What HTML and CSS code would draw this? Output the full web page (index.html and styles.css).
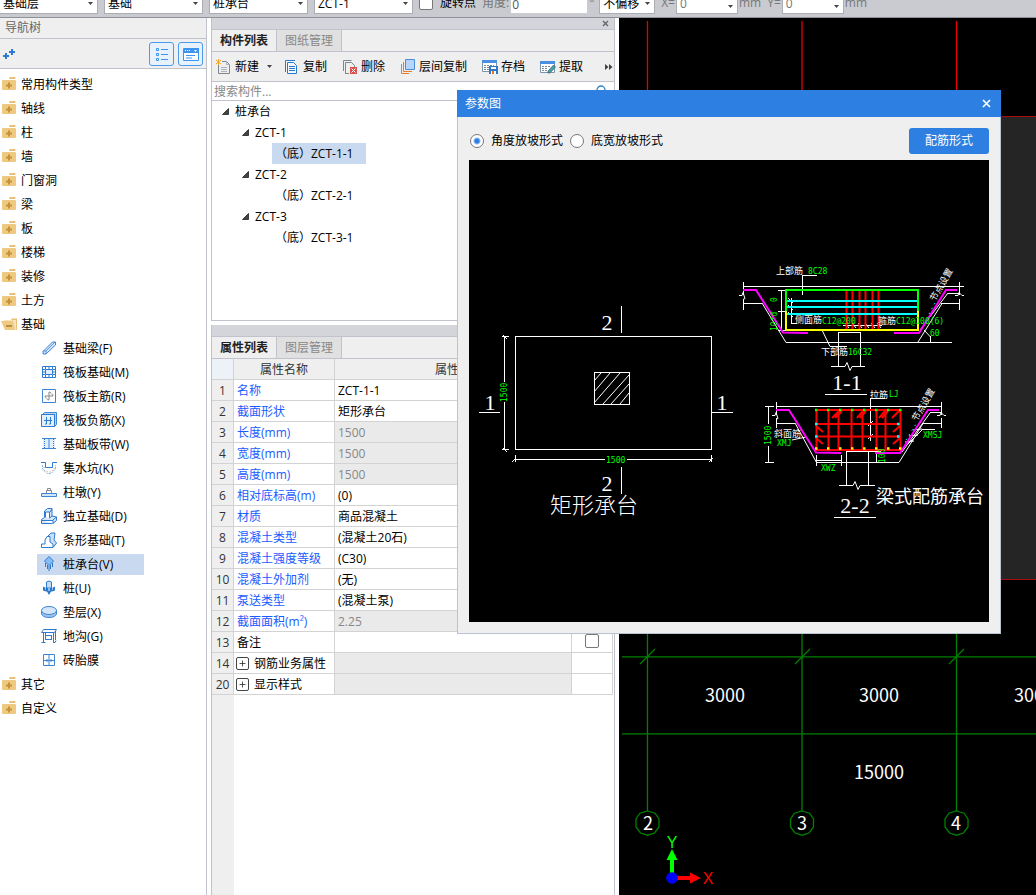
FILE: index.html
```html
<!DOCTYPE html>
<html lang="zh-CN">
<head>
<meta charset="utf-8">
<title>参数图</title>
<link rel="stylesheet" href="styles.css">
</head>
<body>
<svg class="defs" aria-hidden="true">
  <symbol id="caret" viewBox="0 0 5 3"><path d="M0 0h5L2.500 3z" fill="#444"/></symbol>
  <symbol id="expanded" viewBox="0 0 7 7"><path d="M6.500 .5v6H.5z" fill="#444" stroke="#222" stroke-width=".8"/></symbol>
  <symbol id="folder" viewBox="0 0 16 16"><path d="M8 2.500L9 1h5l.5 1v1H8z" fill="#e9c078"/><path d="M2 4h12q1 0 1 1v8q0 1-1 1H2q-1 0-1-1V5q0-1 1-1z" fill="#efc982"/><path d="M8 6.500v6M5 9.500h6" stroke="#c4933c" stroke-width="2"/></symbol>
  <symbol id="folder-open" viewBox="0 0 16 16"><path d="M3 4h7l1-1h5v11H4z" fill="#f7e3b8"/><path d="M11 2.500h5v11l-1 .5V4h-5z" fill="#e9c078"/><path d="M0 5h12l2 9H4z" fill="#efc982"/><path d="M5 10h6" stroke="#a87a24" stroke-width="1.500"/></symbol>
  <symbol id="i-beam" viewBox="0 0 16 16"><path d="M2 11.500L11.500 2h3v3L5 14H2z" fill="#d5e5f8" stroke="#3d86d6"/><path d="M2 11h3v3M5 11l9-9" fill="none" stroke="#3d86d6" stroke-width=".8"/></symbol>
  <symbol id="i-raft" viewBox="0 0 16 16"><g fill="none" stroke="#2d7ad2"><path d="M1.500 2.500h13v11h-13z"/><path d="M4.500 5.500h7v5h-7z" fill="#e3eefb"/><path d="M4.500 3v2M8 3v2M11.500 3v2M4.500 11v2M8 11v2M11.500 11v2M2 5.500h2M2 10.500h2M12 5.500h2M12 10.500h2M2 8h2M12 8h2"/></g></symbol>
  <symbol id="i-main" viewBox="0 0 16 16"><path d="M1.500 1.500h13v13h-13z" fill="#fff" stroke="#3d86d6"/><path d="M8 4v8M4 8h8M8 4q2 0 2 1.500M8 12q-2 0-2-1.500M4 8q0 2 1.500 2M12 8q0-2-1.500-2" fill="none" stroke="#888"/></symbol>
  <symbol id="i-neg" viewBox="0 0 16 16"><path d="M3.500.5h12v12l-2 2V2.500h-12z" fill="#b5d3f5" stroke="#3d86d6"/><path d="M.5 2.500h13v12H.5z" fill="#e3eefb" stroke="#2d7ad2"/><path d="M5.500 5v7M9.500 5v7M3 8.500h8M4 12h1.500M8 12h1.500" fill="none" stroke="#2d7ad2"/></symbol>
  <symbol id="i-strip" viewBox="0 0 16 16"><path d="M2 2h12v11H2z" fill="#e3eefb"/><path d="M1 2.500h14M1 12.500h14M8 3v10" stroke="#3d86d6" fill="none"/><path d="M3.500 3v10M12.500 3v10" stroke="#2d7ad2" stroke-dasharray="1 1"/></symbol>
  <symbol id="i-sump" viewBox="0 0 16 16"><path d="M0 2.500h4.500v5h7v-5H16" fill="none" stroke="#2d7ad2"/><path d="M1.500 5v4L6 13.500h4L14.500 9V5" fill="none" stroke="#7fb0e6" stroke-dasharray="2 1"/><path d="M3 7v3l4 2h3l3-3V8" fill="none" stroke="#999" stroke-dasharray="1 2"/></symbol>
  <symbol id="i-pier" viewBox="0 0 16 16"><path d="M6.500 4.500h3v2h-3zM5.500 9V6.500h5V9" fill="none" stroke="#888"/><path d="M.5 9.500h15v3H.5z" fill="#d5e5f8" stroke="#3d86d6"/></symbol>
  <symbol id="i-iso" viewBox="0 0 16 16"><path d="M.5 11.500l3-2V3l3-2.500h4.500V8l4.500 1v3.500L12 15.500H.5z" fill="#d5e5f8" stroke="#2d7ad2"/><path d="M4.500 9.500V4h4v6M9 4l2-3M.5 12.500H12v3M12 12l3.500-3M8.500 10l2.500-2" fill="#fff" stroke="#2d7ad2"/></symbol>
  <symbol id="i-linear" viewBox="0 0 16 16"><path d="M5 6l5-5h4l-1 7 2.500 3-3 4z" fill="#cfe1f7" stroke="#2d7ad2"/><path d="M.5 15.500V12H4V8l2-3.500h3V10l3 2v3.500z" fill="#fff" stroke="#2d7ad2"/></symbol>
  <symbol id="i-cap" viewBox="0 0 16 16"><path d="M8 .5L12.500 5 8 9.500 3.500 5z" fill="#86bdf4" stroke="#2d7ad2"/><path d="M4.500 7v4M8 10v5M11.500 7v4M6.500 9v4M9.500 9v4" stroke="#2878cc"/></symbol>
  <symbol id="i-pile" viewBox="0 0 16 16"><path d="M5.500 2q2.500-2 5 0v6h-5z" fill="#c5ddf7" stroke="#2d7ad2"/><path d="M2 6.500l3 1.500h6l3-1.500v4l-3 1h-1L8 15l-2-3.500H5l-3-1z" fill="#2878cc"/><path d="M8 8v3M4 9h1M11 9h1" stroke="#fff"/></symbol>
  <symbol id="i-cushion" viewBox="0 0 16 16"><path d="M.5 6v4q1.500 3.500 7.500 3.500t7.500-3.500V6" fill="#9fc5ef" stroke="#3d86d6"/><ellipse cx="8" cy="6.500" rx="7.500" ry="4" fill="#d5e5f8" stroke="#3d86d6"/></symbol>
  <symbol id="i-trench" viewBox="0 0 16 16"><g fill="none" stroke="#2d7ad2"><path d="M.5 4.500l2-3h13l-2 3z"/><path d="M2.500 5v9M4.500 5v7M10.500 7v5M12.500 5v9M5 7.500h6M.5 14.500h4M5 11.500h6M12 14.500h2l1-2M14.500 3v9"/></g></symbol>
  <symbol id="i-brick" viewBox="0 0 16 16"><path d="M2.500 2.500h11v11h-11zM8 3v10M3 8.500h10M6 7v3M10 7v3" fill="#fff" stroke="#3d86d6"/></symbol>
  <symbol id="t-new" viewBox="0 0 16 16"><path d="M2.500 6v8.500h11v-9l-3-3H6" fill="#eee" stroke="#7c8792"/><path d="M10.500 2.500v3h3M5 8.500h6M5 10.500h6M5 12.500h6" fill="none" stroke="#aab2ba"/><path d="M0 1l5 4M5 1L0 5M2.500 0v6" stroke="#f0a51e"/></symbol>
  <symbol id="t-copy" viewBox="0 0 16 16"><path d="M1.500 13V1.500H11M3.500 3.500h6l3 3v8h-9z" fill="#f4f8fd" stroke="#2878cc"/><path d="M5 7.500h6M5 9.500h6M5 11.500h6" stroke="#2878cc"/></symbol>
  <symbol id="t-delete" viewBox="0 0 16 16"><path d="M1.500 12V1.500h8M3.500 14.500v-11h6l3 3V8" fill="none" stroke="#7c8792"/><path d="M3 14.500h4" stroke="#7c8792"/><rect x="8" y="8" width="7" height="7" fill="#d85050"/><path d="M9.500 9.500l4 4M13.500 9.500l-4 4" stroke="#fff"/></symbol>
  <symbol id="t-layer" viewBox="0 0 16 16"><path d="M5.500.5h9v10h-9z" fill="#b9d6fa" stroke="#4a8edb"/><path d="M3.500 3v9.500H12M1.500 5v9.500H9" fill="none" stroke="#e87b26"/></symbol>
  <symbol id="t-save" viewBox="0 0 16 16"><path d="M.5 1.500h14v11H.5z" fill="#fff" stroke="#7d94ad"/><path d="M0 1h15v3H0z" fill="#4a90e2"/><path d="M2 6.500h10M2 8.500h5M2 10.500h5" stroke="#789" stroke-dasharray="2 1"/><path d="M7 7h9v8H7z" fill="#3077cc"/><path d="M9 8h5v2H9z" fill="#fff"/><path d="M9 12h5v3H9z" fill="#fff"/><path d="M10 12h2v3h-2z" fill="#ee7520"/></symbol>
  <symbol id="t-extract" viewBox="0 0 16 16"><path d="M.5 2.500h14v11H.5z" fill="#fff" stroke="#7d94ad"/><path d="M0 2h15v3H0z" fill="#4a90e2"/><path d="M2 7.500h9M2 9.500h6M2 11.500h5" stroke="#789" stroke-dasharray="2 1"/><path d="M13.500 6l2 2L10 14H8v-2z" fill="#3ba4b5" stroke="#555" stroke-width=".7"/></symbol>
</svg>
<div class="app">
  <header class="options">
    <label class="combo wide"><select aria-label="楼层"><option>基础层</option></select><svg><use href="#caret"/></svg></label>
    <label class="combo wide"><select aria-label="分类"><option>基础</option></select><svg><use href="#caret"/></svg></label>
    <label class="combo wide"><select aria-label="构件类型"><option>桩承台</option></select><svg><use href="#caret"/></svg></label>
    <label class="combo wide"><select aria-label="构件"><option>ZCT-1</option></select><svg><use href="#caret"/></svg></label>
    <label class="check-label"><input type="checkbox" class="check">旋转点</label>
    <label class="unit angle">角度:<input class="angle-input" type="text" value="0"><span class="degree">°</span></label>
    <label class="combo offset"><select aria-label="偏移"><option>不偏移</option></select><svg><use href="#caret"/></svg></label>
    <label class="unit">X=<span class="combo spin"><select><option>0</option></select><svg><use href="#caret"/></svg></span>mm</label>
    <label class="unit">Y=<span class="combo spin"><select><option>0</option></select><svg><use href="#caret"/></svg></span>mm</label>
  </header>
  <div class="workspace">
    <nav class="nav">
      <h2 class="nav-title">导航树</h2>
      <div class="nav-tools">
        <button class="plus" aria-label="添加"><svg viewBox="0 0 14 14"><path d="M0 9h6M3 6v6M6 5h6M9 2v6" stroke="#2d7ad2" stroke-width="2"/></svg></button>
        <button class="view" aria-label="列表"><svg viewBox="0 0 16 16" fill="none" stroke="#3d94ee"><path d="M2.500 2.500h2v2h-2zM2.500 7.500h2v2h-2zM2.500 12.500h2v2h-2zM7 3.500h7M7 8.500h7M7 13.500h7"/></svg></button>
        <button class="view" aria-label="面板"><svg viewBox="0 0 16 16"><path d="M.5 2.500h15v12H.5z" fill="#fff" stroke="#3d94ee"/><path d="M1 2h15v5H1z" fill="#3d94ee"/><path d="M2 4.500h6" stroke="#fff" stroke-dasharray="1 1"/><path d="M11 4h3l-1.500 2z" fill="#fff"/><path d="M3 9.500h9M3 12h6" stroke="#3d94ee"/></svg></button>
      </div>
      <ul class="tree">
        <li><button class="node"><svg><use href="#folder"/></svg>常用构件类型</button></li>
        <li><button class="node"><svg><use href="#folder"/></svg>轴线</button></li>
        <li><button class="node"><svg><use href="#folder"/></svg>柱</button></li>
        <li><button class="node"><svg><use href="#folder"/></svg>墙</button></li>
        <li><button class="node"><svg><use href="#folder"/></svg>门窗洞</button></li>
        <li><button class="node"><svg><use href="#folder"/></svg>梁</button></li>
        <li><button class="node"><svg><use href="#folder"/></svg>板</button></li>
        <li><button class="node"><svg><use href="#folder"/></svg>楼梯</button></li>
        <li><button class="node"><svg><use href="#folder"/></svg>装修</button></li>
        <li><button class="node"><svg><use href="#folder"/></svg>土方</button></li>
        <li><button class="node"><svg><use href="#folder-open"/></svg>基础</button>
          <ul class="subtree">
            <li><button class="leaf"><svg><use href="#i-beam"/></svg>基础梁(F)</button></li>
            <li><button class="leaf"><svg><use href="#i-raft"/></svg>筏板基础(M)</button></li>
            <li><button class="leaf"><svg><use href="#i-main"/></svg>筏板主筋(R)</button></li>
            <li><button class="leaf"><svg><use href="#i-neg"/></svg>筏板负筋(X)</button></li>
            <li><button class="leaf"><svg><use href="#i-strip"/></svg>基础板带(W)</button></li>
            <li><button class="leaf"><svg><use href="#i-sump"/></svg>集水坑(K)</button></li>
            <li><button class="leaf"><svg><use href="#i-pier"/></svg>柱墩(Y)</button></li>
            <li><button class="leaf"><svg><use href="#i-iso"/></svg>独立基础(D)</button></li>
            <li><button class="leaf"><svg><use href="#i-linear"/></svg>条形基础(T)</button></li>
            <li><button class="leaf selected"><svg><use href="#i-cap"/></svg>桩承台(V)</button></li>
            <li><button class="leaf"><svg><use href="#i-pile"/></svg>桩(U)</button></li>
            <li><button class="leaf"><svg><use href="#i-cushion"/></svg>垫层(X)</button></li>
            <li><button class="leaf"><svg><use href="#i-trench"/></svg>地沟(G)</button></li>
            <li><button class="leaf"><svg><use href="#i-brick"/></svg>砖胎膜</button></li>
          </ul>
        </li>
        <li><button class="node"><svg><use href="#folder"/></svg>其它</button></li>
        <li><button class="node"><svg><use href="#folder"/></svg>自定义</button></li>
      </ul>
    </nav>
    <div class="panels">
      <section class="panel components">
        <div class="strip"><button class="strip-close" aria-label="关闭"><svg viewBox="0 0 7 7"><path d="M1 1l5 5M6 1L1 6" stroke="#666" stroke-width="1.400"/></svg></button></div>
        <div class="tabs"><button class="tab active">构件列表</button><button class="tab">图纸管理</button></div>
        <div class="toolbar">
          <button class="tool"><svg><use href="#t-new"/></svg>新建<svg class="tool-caret"><use href="#caret"/></svg></button>
          <button class="tool"><svg><use href="#t-copy"/></svg>复制</button>
          <button class="tool"><svg><use href="#t-delete"/></svg>删除</button>
          <button class="tool"><svg><use href="#t-layer"/></svg>层间复制</button>
          <button class="tool"><svg><use href="#t-save"/></svg>存档</button>
          <button class="tool"><svg><use href="#t-extract"/></svg>提取</button>
          <button class="more" aria-label="更多"><svg viewBox="0 0 8 6"><path d="M0 0l3.500 3L0 6zM4 0l3.500 3L4 6z" fill="#444"/></svg></button>
        </div>
        <div class="search"><input type="text" placeholder="搜索构件..." aria-label="搜索构件"><svg viewBox="0 0 12 12"><circle cx="5" cy="5" r="4" fill="none" stroke="#2d86c8" stroke-width="1.300"/><path d="M8 8l3 3" stroke="#2d86c8"/></svg></div>
        <ul class="list">
          <li class="root"><svg><use href="#expanded"/></svg>桩承台</li>
          <li class="branch"><svg><use href="#expanded"/></svg>ZCT-1</li>
          <li class="item"><span class="current">（底）ZCT-1-1</span></li>
          <li class="branch"><svg><use href="#expanded"/></svg>ZCT-2</li>
          <li class="item"><span>（底）ZCT-2-1</span></li>
          <li class="branch"><svg><use href="#expanded"/></svg>ZCT-3</li>
          <li class="item"><span>（底）ZCT-3-1</span></li>
        </ul>
      </section>
      <section class="panel properties">
        <div class="strip"></div>
        <div class="tabs"><button class="tab active">属性列表</button><button class="tab">图层管理</button></div>
        <div class="sheet">
        <table class="props">
          <colgroup><col class="c-num"><col class="c-name"><col class="c-value"><col class="c-extra"></colgroup>
          <thead><tr><th class="corner"></th><th>属性名称</th><th>属性值</th><th></th></tr></thead>
          <tbody>
            <tr><th>1</th><td class="blue">名称</td><td>ZCT-1-1</td><td></td></tr>
            <tr><th>2</th><td class="blue">截面形状</td><td>矩形承台</td><td></td></tr>
            <tr><th>3</th><td class="blue">长度(mm)</td><td class="locked">1500</td><td></td></tr>
            <tr><th>4</th><td class="blue">宽度(mm)</td><td class="locked">1500</td><td></td></tr>
            <tr><th>5</th><td class="blue">高度(mm)</td><td class="locked">1500</td><td></td></tr>
            <tr><th>6</th><td class="blue">相对底标高(m)</td><td>(0)</td><td></td></tr>
            <tr><th>7</th><td class="blue">材质</td><td>商品混凝土</td><td></td></tr>
            <tr><th>8</th><td class="blue">混凝土类型</td><td>(混凝土20石)</td><td></td></tr>
            <tr><th>9</th><td class="blue">混凝土强度等级</td><td>(C30)</td><td></td></tr>
            <tr><th>10</th><td class="blue">混凝土外加剂</td><td>(无)</td><td></td></tr>
            <tr><th>11</th><td class="blue">泵送类型</td><td>(混凝土泵)</td><td></td></tr>
            <tr><th>12</th><td class="blue">截面面积(m²)</td><td class="locked">2.25</td><td></td></tr>
            <tr><th>13</th><td>备注</td><td></td><td class="tick"><input type="checkbox" class="check" aria-label="备注附加"></td></tr>
            <tr><th>14</th><td><button class="expand" aria-label="展开"><svg viewBox="0 0 13 13"><path d="M3 6.500h7M6.500 3v7" stroke="#333"/></svg></button>钢筋业务属性</td><td class="locked"></td><td></td></tr>
            <tr><th>20</th><td><button class="expand" aria-label="展开"><svg viewBox="0 0 13 13"><path d="M3 6.500h7M6.500 3v7" stroke="#333"/></svg></button>显示样式</td><td class="locked"></td><td></td></tr>
          </tbody>
        </table>
        </div>
      </section>
    </div>
    <main class="canvas">
      <svg viewBox="619 18 417 877" preserveAspectRatio="xMinYMin slice">
        <rect x="700" y="117" width="336" height="462" fill="#252525"/>
        <path d="M700 116.500h336M700 579.500h336" stroke="#a80c0c"/>
        <path d="M647.500 21v100M802 21v100M956.500 21v100" stroke="#e80000" stroke-width="1.300"/>
        <g stroke="#008000" fill="none" stroke-width="1.300">
          <path d="M647.500 600v211M802 600v211M956.500 600v211M622 656.800h414M622 733.800h414"/>
          <path d="M640 664l15-15M795 664l15-15M949 664l15-15"/>
          <path id="bubble" d="M647.500 811l7.500 2.200 4 5.800v8l-4.500 6-7 2.200-7-2.200-4.500-6v-8l4-5.800z"/>
          <use href="#bubble" x="154.500"/><use href="#bubble" x="309"/>
        </g>
        <g class="axis-text">
          <text x="725" y="702">3000</text><text x="879" y="702">3000</text><text x="1034" y="702">3000</text><text x="879" y="779">15000</text>
          <text x="648" y="830">2</text><text x="802" y="830">3</text><text x="956" y="830">4</text>
        </g>
        <path d="M672 849l5.500 11H674v13h-4v-13h-3.500z" fill="#0f0"/>
        <path d="M701 878l-11-5.500V876h-13v4h13v3.500z" fill="#f00"/>
        <circle cx="672" cy="878" r="5.800" fill="#00f"/>
        <text class="axis-y" x="672" y="848">Y</text><text class="axis-x" x="708" y="884">X</text>
      </svg>
    </main>
  </div>
  <div class="dialog" role="dialog" aria-labelledby="dialog-title">
    <div class="dialog-head"><h2 id="dialog-title">参数图</h2><button aria-label="关闭"><svg viewBox="0 0 9 9"><path d="M1 1l7 7M8 1L1 8" stroke="#fff" stroke-width="1.700"/></svg></button></div>
    <div class="dialog-body">
      <div class="dialog-bar">
        <label><input type="radio" name="slope" checked>角度放坡形式</label>
        <label><input type="radio" name="slope">底宽放坡形式</label>
        <button class="primary">配筋形式</button>
      </div>
      <svg class="drawing" viewBox="469 160 520 462">
        <rect x="469" y="160" width="520" height="462"/>
        <g class="lines">
          <path d="M515.500 336.500h196v113h-196zM621.500 306v27M621.500 467v27M479 412.500h21M712 412.500h21"/>
          <path d="M504.500 336v46M504.500 402v48M502 336.500h7M502 449.500h7M515 459.500h90M627 459.500h85M515.500 455v7M711.500 455v7M594.500 372.500h35v32h-35z"/>
        </g>
        <path class="diag" d="M503 335l4 4M503 448l4 4M512 462l4-4M709 462l4-4M594 381l7-8M594 392l16-19M594 403l26-30M603 404l26-29M611 404l18-20M620 404l9-11"/>
        <g class="mark"><text x="607" y="330">2</text><text x="607" y="491">2</text><text x="490" y="410">1</text><text x="722" y="410">1</text><text x="847" y="390">1-1</text><text x="855" y="513">2-2</text></g>
        <text class="caption" x="550" y="513">矩形承台</text>
        <text class="caption-small" x="876" y="503">梁式配筋承台</text>
        <g class="dim"><text x="606" y="463">1500</text><text transform="translate(507 402) rotate(-90)">1500</text></g>

        <g class="lines">
          <path d="M743.500 286.500h220M743.500 282v13M743.500 299v11M959.500 282v13M959.500 299v11M743 303.500h19M941 303.500h19M948 293.500h11"/>
          <path d="M786 342.500h166M802.500 295v-19.500H817M781.500 290v40M778 290.500h7M778 311.500h7M778 330.500h7M791.500 298v25.500h5M843 325.500h39M838.500 366v-33.500h22V366M831 366.500h14M852 366.500h13M830 346.500h17M930.500 336v6M825 394.500h42"/>
        </g>
        <path class="diag" d="M739 295.500h3l1-3 2 6-2 1M955 295.500h3l1-3 3 3h2M762 303l24 39.500M918 342l24-38.500M920 330l28-37M821.500 329l8.500 17.500M924 330l6.500 7M845 366.500l2-4 3 8 2-4M788 298l5 5M788 305l5 5M788 312l5 5M845 323l4 5M852 323l4 5M858 323l4 5M865 323l4 5M871 323l4 5M877 323l4 5"/>
        <path class="red" d="M846.500 290v40M852.500 290v40M859.500 290v40M865.500 290v40M872.500 290v40M878.500 290v40"/>
        <path d="M786 301h132M786 307h132M786 314h132" stroke="#0ff" stroke-width="2"/>
        <path d="M786 311v-21h132v21" fill="none" stroke="#0f0" stroke-width="2"/>
        <path d="M786 311v19h132v-19" fill="none" stroke="#ff0" stroke-width="2"/>
        <path class="magenta" d="M743 290h13l27 42.500 25 .5M894 333h25l27-43h11"/>
        <path d="M929 314l6-11" stroke="#0ff" stroke-dasharray="1.500 4"/>
        <g class="note"><text x="776" y="274">上部筋</text><text x="795" y="323">侧面筋</text><text x="878" y="324">箍筋</text><text x="821" y="355">下部筋</text><text transform="translate(935 302) rotate(-60)">节点设置</text></g>
        <g class="dim"><text x="808" y="274">8C28</text><text x="822" y="324">C12@200</text><text x="896" y="324">C12@100(6)</text><text x="848" y="355">16C32</text><text x="930" y="336">60</text><text transform="translate(777 302) rotate(-90)">0</text><text transform="translate(777 331) rotate(-90)">10*d</text></g>

        <g class="lines">
          <path d="M776 406.500h166M776.500 402v13M776.500 418v10M941.500 402v13M941.500 418v10M776 423.500h19M923 423.500h19M930 412.500h12M816 462.500h83M768.500 406v18M768.500 446v16M765 406.500h9M765 462.500h9M870.500 441v-42.500H885"/>
          <path d="M816 460.500h25M816.500 455v11M841.500 455v11M846.500 485v-33.500h22V485M839 485.500h14M860 485.500h15M868 451.500h13M876.500 452v10M923 429.500h12M834 517.500h42"/>
        </g>
        <path class="diag" d="M772 415.500h3l1-3 2 6-2 1M937 415.500h3l1-3 3 3h2M795 423l21.500 39.500M899 462.500l24-39M902 452l28-39M923 429l-15 15M905 442l9-1M909 436l9-1M913 430l9-1M792 440l14-3M853 485.500l2-4 3 8 2-4M868 426l5-5M868 439l5-5"/>
        <path class="red" d="M816.500 410h84v40h-84zM828.500 410v40M838.500 410v40M851.500 410v40M862.500 410v40M876.500 410v40M885.500 410v40M816 424h84M816 436.500h84"/>
        <path class="red" d="M839 411l-7 7M842 411l-7 7M863 411l-6 7M866 411l-6 7M885 411l-6 7M888 411l-6 7M899 411l-7 7M816 426l7 6M816 438l7 6M900 426l-7 6M900 438l-7 6"/>
        <path class="magenta" d="M776 410h13l27 42.500 25 .5M875 453h25l28-43h11"/>
        <path d="M815 410h87" stroke="#0f0" stroke-width="2.500" stroke-dasharray="2.500 9.500"/>
        <path d="M815 448.500h87" stroke="#ff0" stroke-width="2.500" stroke-dasharray="2.500 9.500"/>
        <path d="M815 424h2.500M815 436.500h2.500M897 424h2.500M897 436.500h2.500" stroke="#0ff" stroke-width="2.500"/>
        <path d="M906 440l10-16" stroke="#0ff" stroke-dasharray="1.500 4"/>
        <g class="note"><text x="870" y="398">拉筋</text><text x="774" y="437">斜面筋</text><text transform="translate(917 422) rotate(-60)">节点设置</text></g>
        <g class="dim"><text x="889" y="397">LJ</text><text x="777" y="446">XMJ</text><text x="821" y="471">XWZ</text><text x="923" y="438">XMSJ</text><text transform="translate(771 445) rotate(-90)">1500</text><text transform="translate(885 463) rotate(-90)">100</text></g>
      </svg>
    </div>
  </div>
</div>
</body>
</html>
```
FILE: styles.css
```css
* { box-sizing: border-box; }
body, h2, ul { margin: 0; padding: 0; }
ul { list-style: none; }
body, button, input, select {
  font-family: "Open Sans", "Noto Sans CJK SC", sans-serif;
  font-size: 12px;
  line-height: 16px;
  color: #000;
}
button { border: 0; padding: 0; background: none; }
h2 { font-size: 12px; font-weight: 400; }
svg { display: block; flex: none; }
.defs { position: absolute; width: 0; height: 0; }

.app { position: relative; display: flex; flex-direction: column; height: 100vh; overflow: hidden; background: #fff; }

.options {
  display: flex; align-items: flex-end; gap: 6px; flex: none;
  height: 18px; margin-left: -1px; padding-bottom: 3px; border-bottom: 1px solid #8e9198;
  background: #c9cbd0; overflow: hidden; white-space: nowrap;
}
.combo { position: relative; display: block; flex: none; height: 22px; background: #fff; border: 1px solid #abadb3; }
.combo select { display: block; width: 100%; height: 20px; padding: 2px 0 0 3px; border: 0; background: none; appearance: none; }
.combo svg { position: absolute; right: 4px; bottom: 8px; width: 5px; height: 3px; pointer-events: none; }
.wide { width: 99px; }
.offset { width: 56px; }
.spin { width: 62px; }
.spin svg { bottom: 5px; }
.spin select { color: #777; }
.unit { display: flex; align-items: center; flex: none; height: 22px; gap: 1px; color: #777; }
.check { appearance: none; flex: none; width: 14px; height: 14px; margin: 0; border: 1px solid #777; border-radius: 2px; background: #fff; }
.check-label { display: flex; align-items: center; gap: 7px; height: 22px; }
.angle-input { width: 78px; height: 22px; padding: 2px 1px 0; border: 1px solid #ccc; color: #555; }
.degree { width: 4px; }

.workspace { display: flex; flex: 1; gap: 4px; min-height: 0; }

.nav { display: flex; flex-direction: column; flex: none; width: 207px; border-right: 1px solid #c0c3cb; }
.nav-title { height: 21px; padding: 2px 5px; border-bottom: 1px solid #c0c3cb; background: #efefef; color: #666; }
.nav-tools { display: flex; align-items: center; gap: 4px; height: 30px; padding: 0 3px; border-bottom: 1px solid #c0c3cb; background: #efefef; }
.plus { margin-right: auto; }
.plus svg { width: 14px; height: 14px; }
.view { display: flex; align-items: center; justify-content: center; width: 25px; height: 24px; border: 1px solid #4a9bee; border-radius: 3px; background: #e8f2fd; }
.view svg { width: 16px; height: 16px; }
.tree { padding-top: 3px; }
.node, .leaf { display: flex; align-items: center; padding-top: 2px; white-space: nowrap; }
.node { height: 24px; gap: 4px; padding-left: 1px; }
.node svg, .leaf svg { width: 16px; height: 16px; margin-top: -2px; }
.subtree { padding-left: 37px; }
.subtree li { display: flex; align-items: center; height: 24px; }
.leaf { width: 107px; height: 21px; gap: 6px; padding-left: 4px; }
.leaf.selected { background: #c9d9ef; }

.panels { display: flex; flex-direction: column; flex: none; gap: 4px; width: 404px; }
.panel { display: flex; flex-direction: column; border: 1px solid #c0c3cb; border-top: 0; }
.components { height: 303px; }
.properties { flex: 1; border-bottom: 0; }
.strip { display: flex; justify-content: flex-end; align-items: center; height: 12px; padding: 0 5px; border-bottom: 1px solid #c0c3cb; background: #d4d5da; }
.strip-close svg { width: 7px; height: 7px; }
.tabs { display: flex; height: 22px; border-bottom: 1px solid #c0c3cb; background: #efefef; }
.tab { width: 65px; border-right: 1px solid #c0c3cb; background: #e0e0e0; color: #888; }
.tab.active { background: #efefef; color: #222; font-weight: 700; }
.toolbar { display: flex; align-items: center; gap: 15px; height: 30px; padding: 0 1px 0 4px; border-bottom: 1px solid #c0c3cb; background: #efefef; color: #222; }
.tool { display: flex; align-items: center; gap: 3px; white-space: nowrap; }
.tool svg { width: 16px; height: 16px; }
.tool .tool-caret { width: 5px; height: 3px; margin: 0 -3px 0 5px; }
.more { margin-left: auto; }
.more svg { width: 8px; height: 6px; }
.search { display: flex; align-items: center; justify-content: space-between; height: 19px; padding: 0 6px 0 2px; border-bottom: 1px solid #c0c3cb; }
.search input { flex: 1; height: 18px; padding: 0; border: 0; }
.search input::placeholder { color: #888; }
.search svg { width: 12px; height: 12px; }
.list li { display: flex; align-items: center; height: 21px; gap: 6px; }
.list svg { width: 7px; height: 7px; }
.list .root { padding-left: 10px; }
.list .branch { padding-left: 30px; }
.list .item { padding-left: 60px; }
.list span { height: 21px; padding: 3px 13px 0 3px; }
.list .current { background: #c9d9ef; }

.sheet { flex: 1; background: linear-gradient(to right, #efefef 22px, #fff 22px); }
.props { width: 401px; table-layout: fixed; border-spacing: 0; }
.c-num { width: 22px; }
.c-name { width: 101px; }
.c-extra { width: 41px; }
.props th, .props td { height: 21px; padding: 2px 3px 0; border: solid #d3d3d3; border-width: 0 1px 1px 0; background: #fff; text-align: left; font-weight: 400; white-space: nowrap; line-height: 16px; }
.props th { padding: 2px 0 0; background: #efefef; color: #333; text-align: center; }
.props .corner { background: #edf1f8; }
.props .blue { color: #1a5cff; }
.props .locked { background: #eaeaea; color: #888; }
.props .tick { padding: 0 3px 2px; }
.tick .check { display: block; margin: 0 auto; }
.expand { display: inline-block; width: 13px; height: 13px; margin: 0 5px 0 -1px; border: 1px solid #444; border-radius: 2px; vertical-align: -1px; }
.expand svg { width: 11px; height: 11px; }

.canvas { flex: 1; min-width: 0; background: #000; overflow: hidden; }
.canvas svg { width: 100%; height: 100%; }
.axis-text { font-family: "Noto Sans CJK SC", sans-serif; font-size: 18px; fill: #fff; text-anchor: middle; }
.axis-x, .axis-y { font-family: "Liberation Sans", sans-serif; font-size: 16px; text-anchor: middle; }
.axis-x { fill: #f00; }
.axis-y { fill: #0f0; }

.dialog { position: absolute; left: 457px; top: 90px; width: 544px; border: 1px solid #b9c3d3; border-top: 0; background: #efefef; }
.dialog-head { display: flex; align-items: center; justify-content: space-between; height: 27px; margin: 0 -1px; padding: 0 10px 0 8px; background: #2d7fe1; }
.dialog-head h2 { color: #fff; }
.dialog-head svg { width: 9px; height: 9px; }
.dialog-body { padding: 11px; }
.dialog-bar { display: flex; align-items: center; gap: 7px; padding: 0 0 6px 1px; }
.dialog-bar label { display: flex; align-items: center; gap: 7px; }
.dialog-bar input { appearance: none; width: 14px; height: 14px; margin: 0; border: 1px solid #777; border-radius: 50%; background: #fff; }
.dialog-bar input:checked { background: radial-gradient(circle, #2d7fe1 2px, #fff 4px); border-color: #777; }
.primary { width: 80px; height: 26px; margin-left: auto; border-radius: 3px; background: #2d7fe1; color: #fff; }
.drawing { width: 100%; height: auto; }
.lines { fill: none; stroke: #fff; shape-rendering: crispEdges; }
.diag { fill: none; stroke: #fff; }
.red { fill: none; stroke: #f00; stroke-width: 2px; }
.magenta { fill: none; stroke: #f0f; stroke-width: 2px; }
.mark { font-family: "Liberation Serif", serif; font-size: 22px; fill: #fff; text-anchor: middle; }
.caption { font-family: "Noto Sans CJK SC", sans-serif; font-size: 22px; font-weight: 300; fill: #fff; }
.caption-small { font-family: "Noto Sans CJK SC", sans-serif; font-size: 18px; fill: #fff; }
.note { font-family: "Noto Sans CJK SC", sans-serif; font-size: 9px; fill: #fff; }
.dim { font-family: "DejaVu Sans Mono", monospace; font-size: 8px; fill: #0f0; }
```
